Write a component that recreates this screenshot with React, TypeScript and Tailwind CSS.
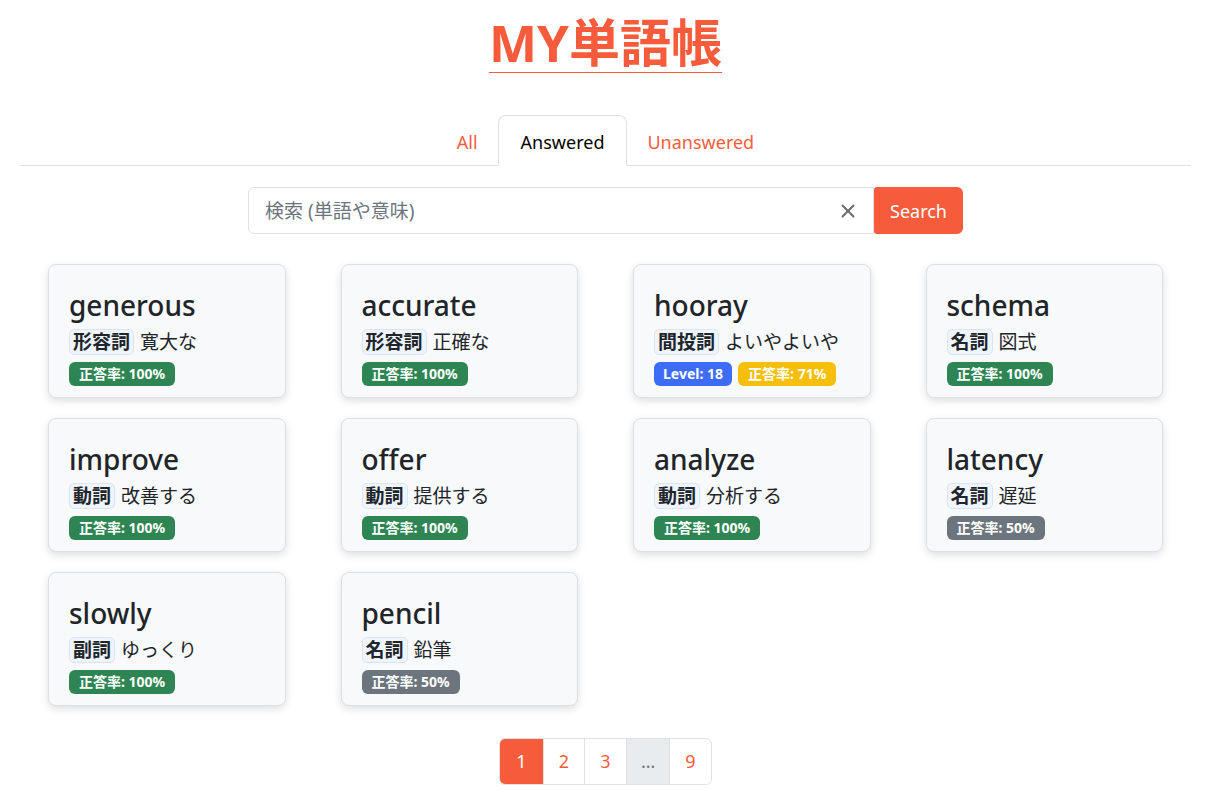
import { X } from 'lucide-react';

const words = [
  { word: 'generous', pos: '形容詞', meaning: '寛大な', rate: 100 },
  { word: 'accurate', pos: '形容詞', meaning: '正確な', rate: 100 },
  { word: 'hooray', pos: '間投詞', meaning: 'よいやよいや', rate: 71, level: 18 },
  { word: 'schema', pos: '名詞', meaning: '図式', rate: 100 },
  { word: 'improve', pos: '動詞', meaning: '改善する', rate: 100 },
  { word: 'offer', pos: '動詞', meaning: '提供する', rate: 100 },
  { word: 'analyze', pos: '動詞', meaning: '分析する', rate: 100 },
  { word: 'latency', pos: '名詞', meaning: '遅延', rate: 50 },
  { word: 'slowly', pos: '副詞', meaning: 'ゆっくり', rate: 100 },
  { word: 'pencil', pos: '名詞', meaning: '鉛筆', rate: 50 },
];

function rateColor(rate: number) {
  if (rate >= 80) return 'bg-[#2e8553]';
  if (rate >= 60) return 'bg-[#f5bf0b]';
  return 'bg-[#6c757d]';
}

function WordCard({ item }: { item: (typeof words)[number] }) {
  return (
    <div className="h-[134px] rounded-lg border border-[#dcdfe3] bg-[#f8f9fa] px-5 pt-[22px] shadow-[0_3px_9px_rgba(0,0,0,0.13)]">
      <div className="text-[28px] leading-[36px] font-medium text-[#212529]">{item.word}</div>
      <div className="mt-[6px] flex items-center gap-[6px] text-[19px] leading-[24px] text-[#212529]">
        <span className="rounded-[5px] border border-[#dbe4ef] bg-[#eef5ff] px-[3px] font-bold">{item.pos}</span>
        <span>{item.meaning}</span>
      </div>
      <div className="mt-[7px] flex gap-[6px]">
        {item.level && (
          <span className="rounded-[6px] bg-[#3d6df6] px-[9px] text-[14px] leading-[24px] font-bold text-white">
            Level: {item.level}
          </span>
        )}
        <span className={`rounded-[6px] ${rateColor(item.rate)} px-[10px] text-[14px] leading-[24px] font-bold text-white`}>
          正答率: {item.rate}%
        </span>
      </div>
    </div>
  );
}

export default function App() {
  return (
    <div className="min-h-screen bg-white font-['Noto_Sans','Noto_Sans_CJK_JP',sans-serif] text-[#212529]">
      <div className="ml-[20px] w-[1171px] pt-[12px]">
        {/* Title */}
        <div className="flex justify-center">
          <div>
            <h1 className="text-[51px] leading-[60px] font-bold text-[#f65c3b]">MY単語帳</h1>
            <div className="h-px bg-[#f65c3b]" />
          </div>
        </div>

        {/* Tabs */}
        <div className="mt-[42px] flex justify-center border-b border-[#dee2e6] text-[18px]">
          <button className="px-5 pt-[13px] pb-[9px] text-[#f65c3b]">All</button>
          <button className="-mb-px rounded-t-lg border border-[#dee2e6] border-b-white bg-white px-[22px] pt-[13px] pb-[9px] text-black">
            Answered
          </button>
          <button className="px-5 pt-[13px] pb-[9px] text-[#f65c3b]">Unanswered</button>
        </div>

        {/* Search */}
        <div className="mt-[21px] flex justify-center">
          <div className="flex h-[47px] w-[715px]">
            <div className="flex flex-1 items-center rounded-l-md border border-[#dee2e6] pl-4 pr-[14px]">
              <span className="flex-1 pt-[2px] text-[19px] text-[#6c757d]">検索 (単語や意味)</span>
              <X className="h-[22px] w-[22px] text-[#6c6c6c]" strokeWidth={2.2} />
            </div>
            <button className="rounded-r-md rounded-l-[3px] bg-[#f65c3b] px-4 pt-[2px] text-[18px] text-white">Search</button>
          </div>
        </div>

        {/* Cards */}
        <div className="mt-[30px] grid grid-cols-4 gap-x-[55px] gap-y-5 px-[28px]">
          {words.map((w) => (
            <WordCard key={w.word} item={w} />
          ))}
        </div>

        {/* Pagination */}
        <div className="mt-[32px] flex justify-center pb-6">
          <div className="flex h-[47px] overflow-hidden rounded-md border border-[#dee2e6] text-[18px]">
            <span className="flex w-[43px] items-center justify-center bg-[#f65c3b] text-white">1</span>
            <span className="flex w-[41px] items-center justify-center border-l border-[#dee2e6] text-[#f65c3b]">2</span>
            <span className="flex w-[42px] items-center justify-center border-l border-[#dee2e6] text-[#f65c3b]">3</span>
            <span className="flex w-[43px] items-center justify-center border-l border-[#dee2e6] bg-[#e9ecef] text-[#6c757d]">…</span>
            <span className="flex w-[42px] items-center justify-center border-l border-[#dee2e6] text-[#f65c3b]">9</span>
          </div>
        </div>
      </div>
    </div>
  );
}
